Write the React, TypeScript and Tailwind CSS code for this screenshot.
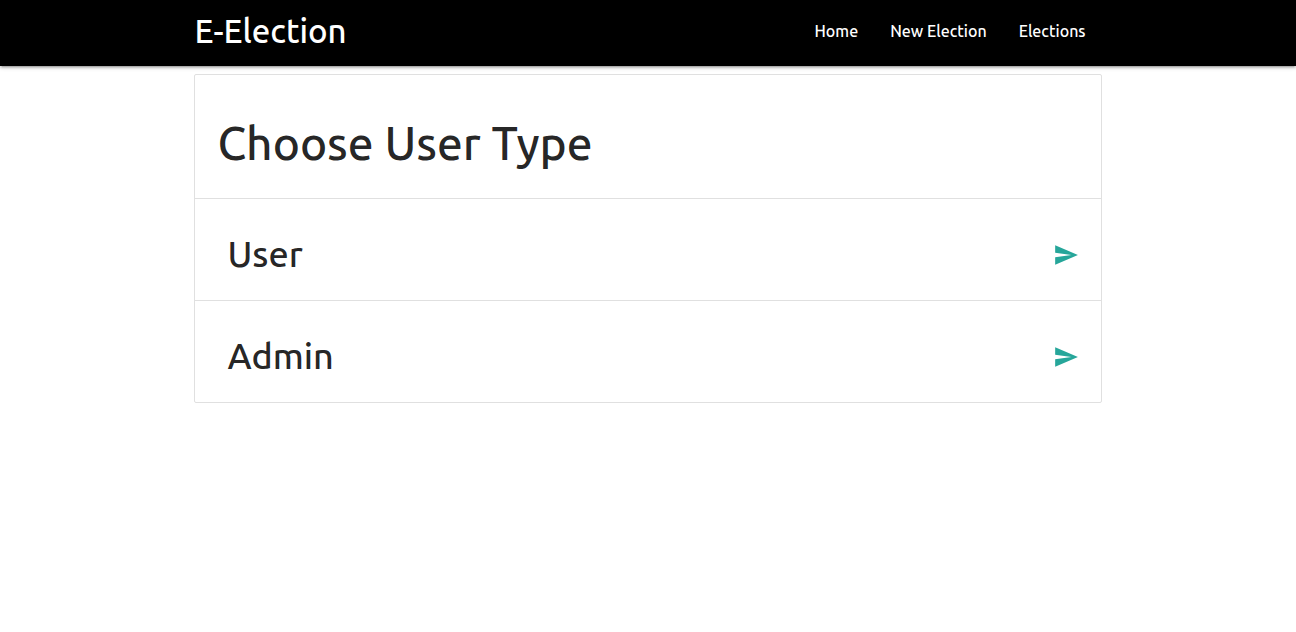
const navItems = ['Home', 'New Election', 'Elections'];
const userTypes = ['User', 'Admin'];

function SendIcon() {
  return (
    <svg className="size-[26px]" viewBox="0 0 24 24" fill="currentColor" aria-hidden="true">
      <path d="M2.01 21L23 12 2.01 3 2 10l15 2-15 2z" />
    </svg>
  );
}

export default function App() {
  return (
    <div className="min-h-screen bg-white font-['Ubuntu','Noto_Sans',sans-serif] font-medium text-black/87">
      <nav className="bg-black text-white shadow-[0_2px_2px_0_rgba(0,0,0,0.14),0_3px_1px_-2px_rgba(0,0,0,0.12),0_1px_5px_0_rgba(0,0,0,0.2)]">
        <div className="mx-auto flex h-[66px] w-[70%] items-center justify-between pb-1">
          <a href="#" className="text-[33px]">E-Election</a>
          <ul className="flex">
            {navItems.map((item) => (
              <li key={item}>
                <a href="#" className="px-4 text-base">{item}</a>
              </li>
            ))}
          </ul>
        </div>
      </nav>
      <main className="mx-auto mt-2 w-[70%]">
        <ul className="rounded-xs border border-[#e0e0e0]">
          <li className="flex h-[124px] items-center border-b border-[#e0e0e0] px-[22px] pt-[14px]">
            <h1 className="text-[46px] font-medium">Choose User Type</h1>
          </li>
          {userTypes.map((type) => (
            <li key={type} className="flex h-[102px] items-center justify-between border-b border-[#e0e0e0] px-[22px] pt-[10px] last:h-[101px] last:border-b-0">
              <h2 className="px-[10px] pb-0.5 text-4xl font-medium">{type}</h2>
              <a href="#" aria-label={type} className="text-[#26a69a]">
                <SendIcon />
              </a>
            </li>
          ))}
        </ul>
      </main>
    </div>
  );
}
